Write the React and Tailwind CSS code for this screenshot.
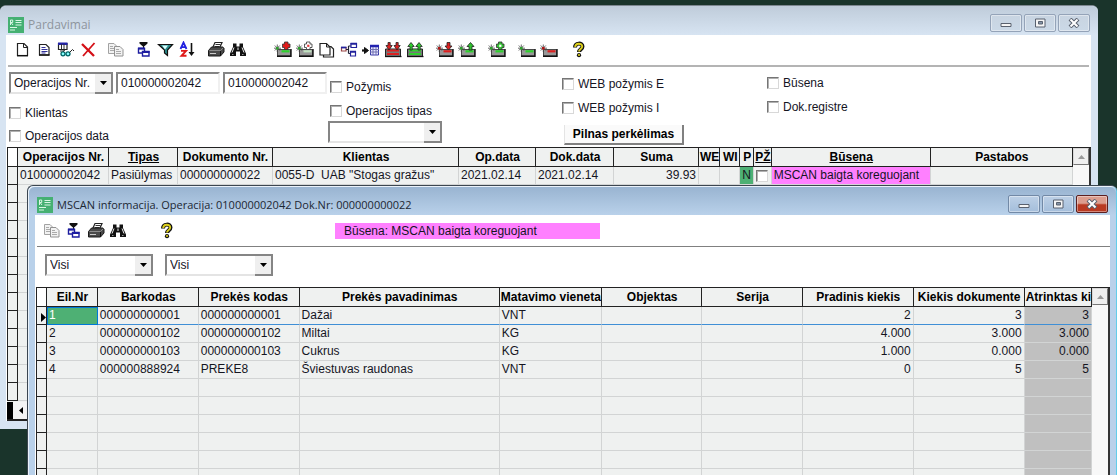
import React from "react";

/* ---------- Toolbar icons ---------- */

const Icon = ({ children, width = 18 }) => (
  <svg width={width} height="18" viewBox={`0 0 ${width} 18`} fill="none" aria-hidden="true">
    {children}
  </svg>
);

const NewIcon = () => (
  <Icon>
    <path d="M4.500 2.500h6.500l3.500 3.500v8.500h-10z" fill="#fff" stroke="#222" strokeWidth="1.200" />
    <path d="M10.500 2.500v4h4" stroke="#222" />
    <path d="M4 14.700h11" stroke="#111" strokeWidth="1.500" />
  </Icon>
);

const DocIcon = () => (
  <Icon>
    <path d="M4.500 3.500h6.500l3 3v7.500h-9.500z" fill="#fff" stroke="#222" strokeWidth="1.200" />
    <path d="M4 14h10.500" stroke="#111" strokeWidth="1.500" />
    <path d="M6.500 6.500h4M6.500 8.500h6M6.500 10.500h6M6.500 12h4" stroke="#33339a" strokeWidth="1.200" />
  </Icon>
);

const PreviewIcon = () => (
  <Icon>
    <path d="M1.500 2.500h8.500v6H1.500z" fill="#fff" stroke="#222" strokeWidth="1.200" />
    <path d="M1 1.500h9.500V4H1z" fill="#2424a8" />
    <path d="M4.500 3v5M7 3v5M3 10h4" stroke="#333" />
    <circle cx="6" cy="12.800" r="2" fill="#8ff" stroke="#066" strokeWidth="1.300" />
    <circle cx="11" cy="12.800" r="2" fill="#8ff" stroke="#066" strokeWidth="1.300" />
    <path d="M12.500 11.500L15.500 8.500l1.500 1.500M6 10.500l2.500-2" stroke="#222" />
  </Icon>
);

const DeleteIcon = () => (
  <Icon>
    <path d="M3 3l12 12" stroke="#d40f16" strokeWidth="2.300" />
    <path d="M15.500 2L4 15" stroke="#d40f16" strokeWidth="1.800" />
  </Icon>
);

const CopyIcon = () => (
  <Icon>
    <path d="M1.500 2.500h5.500l3 3v7H1.500z" fill="#f2f2f2" stroke="#a2a2a2" />
    <path d="M3 5.500h3M3 7.500h4M3 9.500h4" stroke="#aaa" />
    <path d="M7.500 5.500h5.500l3 3v6.500H7.500z" fill="#f2f2f2" stroke="#929292" />
    <path d="M9 8.500h3M9 10.500h5M9 12.500h5" stroke="#aaa" />
  </Icon>
);

const TreeIcon = () => (
  <Icon>
    <path d="M4.500 1h8v1.500L8.500 6l-4-3.500z" fill="#111" />
    <path d="M8.500 5v2" stroke="#111" />
    <path d="M3.500 7.500h6v4.500h-6z" fill="#fff" stroke="#1c1ca0" strokeWidth="1.400" />
    <path d="M7.500 10.500h6.500v4.500H7.500z" fill="#fff" stroke="#1c1ca0" strokeWidth="1.400" />
    <path d="M3 7.500h7M7 11h7.500" stroke="#1c1ca0" strokeWidth="1.800" />
  </Icon>
);

const FilterIcon = () => (
  <Icon>
    <path d="M1.500 3.500h14L10.500 9v5.500l-3-2.500V9z" fill="#2a8d8d" stroke="#111" strokeWidth="1.200" />
    <path d="M5 4.500h6L8 8.500z" fill="#d9ffff" />
  </Icon>
);

const SortIcon = () => (
  <Icon>
    <path d="M1.500 8l3-6.500L7.500 8M3 6.200h3.500" stroke="#2222e0" strokeWidth="1.800" />
    <path d="M2 9.900h5L2.500 14.800H7.500" stroke="#e01a1a" strokeWidth="1.900" />
    <path d="M12.500 2v11" stroke="#111" strokeWidth="1.600" />
    <path d="M9.500 11h6l-3 4z" fill="#111" />
  </Icon>
);

const PrintIcon = () => (
  <Icon>
    <path d="M5.500 7l2.500-5.500h7L12.500 7" fill="#fff" stroke="#222" strokeWidth="1.200" />
    <path d="M8.500 3.500h5M7.500 5.500h5" stroke="#333" />
    <path d="M1.500 9.500l3-3.500h11.500l1 1v4l-3.500 4h-12z" fill="#4a4a4a" stroke="#1a1a1a" />
    <path d="M2.500 9.500h11l3-3" stroke="#8c8c8c" />
    <path d="M3 12.500h6" stroke="#ccc" />
    <path d="M13.500 10v5" stroke="#111" />
  </Icon>
);

const FindIcon = () => (
  <Icon>
    <path d="M4 2.500h3.500v3h3v-3H14v3.500l3 6.500v2.500h-6v-4.500H7v4.500H1v-2.500L4 6z" fill="#111" />
    <path d="M5 6.500L3 11.500M13 6.500l2 5M9 6.500v2.500" stroke="#eee" />
    <path d="M3 13.500h1.500M13 13.500h1.500" stroke="#999" />
  </Icon>
);

const HelpIcon = () => (
  <Icon>
    <path d="M5 6.500c0-5 7.500-5 7.500-1 0 2.800-3.500 3-3.500 5.500" stroke="#111" strokeWidth="4" />
    <circle cx="9" cy="14.200" r="2.100" fill="#111" />
    <path d="M5.200 6c0-4.300 7-4.300 7-.5 0 2.800-3.200 2.800-3.200 5" stroke="#dccf1c" strokeWidth="1.900" />
    <circle cx="9" cy="14" r="1.100" fill="#dccf1c" />
  </Icon>
);

const PagesIcon = () => (
  <Icon>
    <path d="M5.500 5.500h7.500l2.500 2.500v8h-10z" fill="#fff" stroke="#222" strokeWidth="1.200" />
    <path d="M2 2.500h6.500l3.500 3.500v8H2z" fill="#fff" stroke="#222" strokeWidth="1.200" />
    <path d="M8.500 2.500V6H12" stroke="#222" />
  </Icon>
);

const FlowIcon = () => (
  <Icon>
    <path d="M1.500 6.500h4.500v3.500h-4.500z" fill="#fff" stroke="#944" strokeWidth="1.200" />
    <path d="M1 6.500h5.500" stroke="#22229c" strokeWidth="1.800" />
    <path d="M6 8.500h3M8.500 5v7.500M8.500 5H11M8.500 12.500H11" stroke="#223" strokeWidth="1.200" />
    <path d="M11 2.500h5.500v4H11zM10.500 10.500h5v4.500h-5z" fill="#fff" stroke="#22229c" strokeWidth="1.200" />
    <path d="M10.500 2.700h6.500M10 10.700h6" stroke="#22229c" strokeWidth="2" />
  </Icon>
);

const ArrowTableIcon = () => (
  <Icon>
    <path d="M0 9.500h4" stroke="#111" strokeWidth="2.200" />
    <path d="M2.500 6.500l4 3-4 3z" fill="#111" stroke="#111" />
    <path d="M8.500 4.500h8v9.500h-8z" fill="#e8e8ff" stroke="#3a3aa8" />
    <path d="M8 5h9" stroke="#2222b0" strokeWidth="2.500" />
    <path d="M11 6v8M14 6v8M8 8.500h9M8 11h9" stroke="#7070b0" />
  </Icon>
);

const BoxArrowsIcon = ({ color, down }) => (
  <Icon>
    <path d="M1.500 8h15v7.500h-15z" fill="#777" stroke="#222" />
    <path d="M3 9.500h12M3 13h12" stroke={color} strokeWidth="2" />
    <path d="M1 15.500h16.500" stroke="#111" strokeWidth="1.300" />
    {down ? (
      <path d="M4 1.500h2.200v3h2L5 9 2 4.500h2zM12 1.500h2.200v3h2L13 9l-3-4.500h2z" fill={color} stroke="#222" strokeWidth=".8" />
    ) : (
      <path d="M4 9h2.200V5.500h2L5 1.500l-3.200 4H4zM12 9h2.200V5.500h2L13 1.500l-3.200 4H12z" fill={color} stroke="#222" strokeWidth=".8" />
    )}
  </Icon>
);

// Scanner box with a spark on its left, the mark on top says what is sent
const BoxIcon = ({ bar, spark = "#2fa02f", children }) => (
  <Icon>
    <path d="M3.500 8.500h13v6.500h-13z" fill="#989898" stroke="#4a4a4a" />
    <path d="M3 15.300h14V8" stroke="#111" strokeWidth="1.400" />
    <path d="M7.500 10.300h8" stroke={bar} strokeWidth="2.200" />
    <path d="M0 7.200h7M3.300 3.500v7.500M.8 4.500l5 5M5.800 4.500l-5 5" stroke="#444" strokeWidth=".8" />
    <path d="M2 6h2.600v2.600H2z" fill={spark} />
    {children}
  </Icon>
);

const PlusMark = ({ fill, dot }) => (
  <>
    <path d="M10.500 1h3.500v2h2v3.500h-2v2h-3.500v-2h-2V3h2z" fill={fill} stroke="#333" strokeWidth=".8" />
    {dot && <path d="M11.200 3.700h2.200v2.200h-2.200z" fill={dot} />}
  </>
);

const ArrowMark = ({ fill, down }) => (
  <path
    d={down ? "M11 1.500h3v3.500h2L12.500 9 9 5h2z" : "M11 9h3V5.500h2l-3.500-4-3.500 4h2z"}
    fill={fill}
    stroke="#222"
    strokeWidth=".8"
  />
);

const AppLogo = () => (
  <svg width="16" height="16" viewBox="0 0 16 16" fill="none" className="shrink-0" aria-hidden="true">
    <path d="M0 0h16v16H0z" fill="#45b072" />
    <path d="M2.500 8V3h2.200v2.500H3l2 2.500M7.500 3.500h6M7.500 5.500h6M7.500 8h6M2 10.500h7M2 13h5" stroke="#d9f7e4" />
  </svg>
);

const ToolButton = ({ label, children }) => (
  <button type="button" aria-label={label} className="flex h-[22px] w-[22px] items-center justify-center">
    {children}
  </button>
);

/* ---------- Form controls ---------- */

const Arrow = ({ up, color = "#000" }) => (
  <svg width="7" height="4" viewBox="0 0 7 4" aria-hidden="true">
    <path d={up ? "M0 4L3.500 0 7 4z" : "M0 0h7L3.500 4z"} fill={color} />
  </svg>
);

const Select = ({ label, value, className }) => (
  <div className={`relative h-[22px] ${className}`}>
    <select
      aria-label={label}
      defaultValue={value}
      className="h-full w-full appearance-none border-2 border-[#858585] border-b-[#e4e4e4] bg-white pl-[3px] text-xs outline-none"
    >
      <option>{value}</option>
    </select>
    <span className="pointer-events-none absolute inset-y-0 right-0 flex w-[18px] items-center justify-center border-t-2 border-r-2 border-b-2 border-[#858585] bg-[#efefef]">
      <Arrow />
    </span>
  </div>
);

const TextBox = ({ label, value }) => (
  <input
    type="text"
    aria-label={label}
    defaultValue={value}
    className="h-[22px] w-[104px] border-2 border-t-[#858585] border-r-[#f0f0f0] border-b-[#f0f0f0] border-l-[#858585] bg-white pl-[3px] text-xs outline-none"
  />
);

const CheckBox = ({ label, className = "h-5" }) => (
  <label className={`flex items-center gap-1 ${className}`}>
    <input
      type="checkbox"
      className="h-3 w-3 appearance-none border border-t-[#757575] border-r-[#d8d8d8] border-b-[#d8d8d8] border-l-[#757575] bg-white shadow-[inset_1px_1px_0_#b0b0b0]"
    />
    {label}
  </label>
);

/* ---------- Window frame ---------- */

const WindowButtons = ({ active }) => {
  const base = "flex h-[18px] w-8 items-center justify-center rounded-[2px] border shadow-[inset_0_0_0_1px_rgba(255,255,255,0.4)]";
  const plain = active
    ? "border-[#7289a6] bg-linear-to-b from-[#bdd0e6] to-[#a4bedb]"
    : "border-[#94a3b8] bg-linear-to-b from-[#c8d4e1] to-[#cbd9e7]";
  const close = active
    ? "border-[#5c1f1f] bg-linear-to-b from-[#dc9d8e] from-45% to-[#b93a22] to-55%"
    : plain;

  return (
    <div className="flex gap-0.5 self-start">
      <button type="button" aria-label="Minimize" className={`${base} ${plain}`}>
        <svg width="12" height="10" viewBox="0 0 12 10">
          <path d="M1 5.500h10v3H1z" fill="#f5f5f5" stroke="#59616e" />
        </svg>
      </button>
      <button type="button" aria-label="Maximize" className={`${base} ${plain}`}>
        <svg width="12" height="10" viewBox="0 0 12 10">
          <path d="M1.500 1h9.500v8H1.500z" fill="#f5f5f5" stroke="#59616e" />
          <path d="M4.500 3.500h4v2.500h-4z" fill="#8494a8" stroke="#59616e" />
        </svg>
      </button>
      <button type="button" aria-label="Close" className={`${base} ${close}`}>
        <svg width="12" height="10" viewBox="0 0 12 10">
          <path d="M2 1l8 8M10 1L2 9" stroke="#59616e" strokeWidth="4" />
          <path d="M2.500 1.500l7 7M9.500 1.500l-7 7" stroke="#fff" strokeWidth="2" />
        </svg>
      </button>
    </div>
  );
};

/* ---------- Grid ---------- */

const ScrollTrack = () => (
  <div className="w-[18px] shrink-0 border-r-2 border-[#333] bg-[#f8f8f8]">
    <button
      type="button"
      aria-label="Scroll up"
      className="flex h-[17px] w-4 items-center justify-center border border-[#d8d8d8] border-r-[#777] border-b-[#777] bg-[#efefef]"
    >
      <Arrow up color="#999" />
    </button>
  </div>
);

const Grid = ({ columns, rows, emptyRows, current }) => (
  <div className="flex border-t border-l border-[#222]">
    <table className="min-w-0 flex-1 table-fixed border-separate border-spacing-0 bg-[#eff1f0]">
      <colgroup>
        <col className="w-[10px]" />
        {columns.map((col) => (
          <col key={col.title} className={col.width} />
        ))}
      </colgroup>
      <thead>
        <tr className="h-[19px]">
          <th className="border-r border-b border-[#222] bg-white p-0" />
          {columns.map((col) => (
            <th
              key={col.title}
              className={`overflow-hidden border-r border-b border-[#222] p-0 pl-px leading-[18px] font-bold whitespace-nowrap text-black ${
                col.underline ? "underline" : ""
              }`}
            >
              {col.title}
            </th>
          ))}
        </tr>
      </thead>
      <tbody>
        {rows.map((row, i) => (
          <tr key={i} className="h-[18px]">
            <td className="border-r border-b border-[#222] p-0">
              {current === i && (
                <svg width="9" height="9" viewBox="0 0 9 9" className="mt-1" aria-hidden="true">
                  <path d="M4 0l5 4.500L4 9z" fill="#000" />
                </svg>
              )}
            </td>
            {row.map((cell, j) => {
              const col = columns[j];
              const selected = current === i && j === 0;
              return (
                <td
                  key={col.title}
                  className={`overflow-hidden border-r border-b p-0 px-0.5 leading-[17px] whitespace-pre ${
                    col.right ? "text-right" : ""
                  } ${current === i ? "border-b-[#3f8fd6]" : "border-b-[#d2d4d4]"} ${
                    selected
                      ? "border-r-[#0078d7] bg-[#4eb074] text-white outline outline-offset-[-1px] outline-[#0078d7]"
                      : `border-r-[#d2d4d4] ${col.cell || ""}`
                  }`}
                >
                  {cell}
                </td>
              );
            })}
          </tr>
        ))}
        {Array.from({ length: emptyRows }, (_, i) => (
          <tr key={`empty-${i}`} className="h-[18px]">
            <td className="border-r border-b border-[#222] p-0" />
            {columns.map((col) => (
              <td
                key={col.title}
                className={`border-r border-b border-[#d2d4d4] p-0 ${col.emptyCell || ""}`}
              />
            ))}
          </tr>
        ))}
      </tbody>
    </table>
    <ScrollTrack />
  </div>
);

const salesColumns = [
  { title: "Operacijos Nr.", width: "w-[91px]" },
  { title: "Tipas", width: "w-[69px]", underline: true },
  { title: "Dokumento Nr.", width: "w-[95px]" },
  { title: "Klientas", width: "w-[186px]" },
  { title: "Op.data", width: "w-[77px]" },
  { title: "Dok.data", width: "w-[78px]" },
  { title: "Suma", width: "w-[85px]", right: true },
  { title: "WE", width: "w-[21px]" },
  { title: "WI", width: "w-[20px]" },
  { title: "P", width: "w-[14px]", cell: "bg-[#4eb074]" },
  { title: "PŽ", width: "w-[17px]", underline: true },
  { title: "Būsena", width: "w-[159px]", underline: true, cell: "bg-[#ff80ff]" },
  { title: "Pastabos", width: "w-auto" },
];

const salesRows = [
  [
    "010000002042",
    "Pasiūlymas",
    "000000000022",
    '0055-D  UAB "Stogas gražus"',
    "2021.02.14",
    "2021.02.14",
    "39.93",
    "",
    "",
    "N",
    <input
      type="checkbox"
      aria-label="PŽ"
      className="block h-3 w-3 appearance-none border border-t-[#757575] border-r-[#d8d8d8] border-b-[#d8d8d8] border-l-[#757575] bg-white shadow-[inset_1px_1px_0_#b0b0b0]"
    />,
    "MSCAN baigta koreguojant",
    "",
  ],
];

const scanColumns = [
  { title: "Eil.Nr", width: "w-[51px]" },
  { title: "Barkodas", width: "w-[101px]" },
  { title: "Prekės kodas", width: "w-[101px]" },
  { title: "Prekės pavadinimas", width: "w-[201px]" },
  { title: "Matavimo vieneta", width: "w-[101px]" },
  { title: "Objektas", width: "w-[101px]" },
  { title: "Serija", width: "w-[101px]" },
  { title: "Pradinis kiekis", width: "w-[111px]", right: true },
  { title: "Kiekis dokumente", width: "w-[111px]", right: true },
  { title: "Atrinktas ki", width: "w-auto", right: true, cell: "bg-[#c0c0c0]", emptyCell: "bg-[#c0c0c0]" },
];

const scanRows = [
  ["1", "000000000001", "000000000001", "Dažai", "VNT", "", "", "2", "3", "3"],
  ["2", "000000000102", "000000000102", "Miltai", "KG", "", "", "4.000", "3.000", "3.000"],
  ["3", "000000000103", "000000000103", "Cukrus", "KG", "", "", "1.000", "0.000", "0.000"],
  ["4", "000000888924", "PREKE8", "Šviestuvas raudonas", "VNT", "", "", "0", "5", "5"],
];

/* ---------- Windows ---------- */

const SalesToolbar = () => (
  <div className="mx-0.5 flex h-8 items-center border-b-2 border-[#b4b4b4] pl-[3px]">
    <div className="flex gap-1.5">
      <div className="flex">
        <ToolButton label="Naujas"><NewIcon /></ToolButton>
        <ToolButton label="Atidaryti"><DocIcon /></ToolButton>
        <ToolButton label="Peržiūra"><PreviewIcon /></ToolButton>
        <ToolButton label="Trinti"><DeleteIcon /></ToolButton>
      </div>
      <ToolButton label="Kopijuoti"><CopyIcon /></ToolButton>
      <div className="flex">
        <ToolButton label="Struktūra"><TreeIcon /></ToolButton>
        <ToolButton label="Filtras"><FilterIcon /></ToolButton>
        <ToolButton label="Rūšiuoti"><SortIcon /></ToolButton>
      </div>
      <div className="flex">
        <ToolButton label="Spausdinti"><PrintIcon /></ToolButton>
        <ToolButton label="Ieškoti"><FindIcon /></ToolButton>
      </div>
    </div>
    <div className="ml-[23px] flex gap-2">
      <div className="flex">
        <ToolButton label="Pridėti"><BoxIcon bar="#2fd02f"><PlusMark fill="#e01a1a" /></BoxIcon></ToolButton>
        <ToolButton label="Pridėti tuščią"><BoxIcon bar="#bfe0bf"><PlusMark fill="#fff" dot="#e03a3a" /></BoxIcon></ToolButton>
        <ToolButton label="Lapai"><PagesIcon /></ToolButton>
        <ToolButton label="Ryšiai"><FlowIcon /></ToolButton>
        <ToolButton label="Į lentelę"><ArrowTableIcon /></ToolButton>
        <ToolButton label="Įkelti viską"><BoxArrowsIcon color="#dc2020" down /></ToolButton>
        <ToolButton label="Iškelti viską"><BoxArrowsIcon color="#2fd02f" /></ToolButton>
      </div>
      <div className="flex">
        <ToolButton label="Įkelti"><BoxIcon bar="#dc2020" spark="#b01818"><ArrowMark fill="#dc2020" down /></BoxIcon></ToolButton>
        <ToolButton label="Iškelti"><BoxIcon bar="#2fd02f"><ArrowMark fill="#2fc02f" /></BoxIcon></ToolButton>
      </div>
      <ToolButton label="Papildyti"><BoxIcon bar="#2fd02f"><PlusMark fill="#35c435" dot="#fff" /></BoxIcon></ToolButton>
      <div className="flex">
        <ToolButton label="Aktyvuoti"><BoxIcon bar="#2fd02f" /></ToolButton>
        <ToolButton label="Išjungti"><BoxIcon bar="#dc2020" spark="#b01818" /></ToolButton>
      </div>
      <ToolButton label="Pagalba"><HelpIcon /></ToolButton>
    </div>
  </div>
);

const SalesFilters = () => (
  <div className="flex h-20 pl-[3px]">
    <div className="w-[319px] pt-[5px]">
      <div className="flex gap-[3px]">
        <Select label="Paieškos laukas" value="Operacijos Nr." className="w-[104px]" />
        <TextBox label="Nuo" value="010000002042" />
        <TextBox label="Iki" value="010000002042" />
      </div>
      <div className="mt-[7px]">
        <CheckBox label="Klientas" className="h-[23px]" />
        <CheckBox label="Operacijos data" className="h-[23px]" />
      </div>
    </div>
    <div className="flex w-[234px] flex-col pt-2.5">
      <div className="flex flex-col gap-1 pl-0.5">
        <CheckBox label="Požymis" />
        <CheckBox label="Operacijos tipas" />
      </div>
      <Select label="Operacijos tipas" value="" className="w-[114px]" />
    </div>
    <div className="flex w-[205px] flex-col gap-1 pt-[7px]">
      <CheckBox label="WEB požymis E" />
      <CheckBox label="WEB požymis I" />
      <button
        type="button"
        className="mt-[3px] ml-0.5 h-5 w-[120px] border-r-2 border-b-2 border-l border-[#808080] border-l-[#e4e4e4] bg-[#fafafa] font-bold text-black"
      >
        Pilnas perkėlimas
      </button>
    </div>
    <div className="flex flex-col gap-1 pt-1.5">
      <CheckBox label="Būsena" />
      <CheckBox label="Dok.registre" />
    </div>
  </div>
);

const SalesWindow = () => (
  <section className="absolute top-[5px] right-[19px] left-0 rounded-t-md border-t border-[#7d8790] bg-[#d7e4f2] pr-[7px] pb-2 pl-1.5">
    <header className="-mr-[7px] -ml-1.5 flex h-[29px] items-center rounded-t-md bg-linear-to-b from-[#bfccda] to-[#d7e4f2] px-2 pt-2">
      <AppLogo />
      <h1 className="ml-1 flex-1 font-['Open_Sans',sans-serif] text-xs leading-4 text-[#8e959d]">Pardavimai</h1>
      <WindowButtons />
    </header>
    <div className="bg-white">
      <SalesToolbar />
      <SalesFilters />
      <div className="pl-px">
        <Grid columns={salesColumns} rows={salesRows} emptyRows={12} />
        <div className="flex h-5 items-end border-b-2 border-[#222] bg-[#eff1f0]">
          <span className="h-[17px] w-1.5 bg-black" />
          <button
            type="button"
            aria-label="Scroll left"
            className="flex h-[17px] w-4 items-center justify-center bg-[#f4f4f4]"
          >
            <svg width="4" height="7" viewBox="0 0 4 7" aria-hidden="true">
              <path d="M4 0v7L0 3.500z" fill="#000" />
            </svg>
          </button>
        </div>
      </div>
    </div>
  </section>
);

const ScanWindow = () => (
  <section className="absolute top-[185px] right-0 left-[27px] rounded-t-md border-t border-l border-[#3c4650] bg-[#b9d1ea] pr-[7px] pl-[7px] shadow-[inset_1px_1px_0_#eaf2fa,inset_-1px_0_0_#62cdea]">
    <header className="-mx-1.5 mt-px flex h-7 items-center rounded-t-md bg-linear-to-b from-[#99b4d1] to-[#b9d1ea] px-2 pt-2">
      <AppLogo />
      <h2 className="ml-1 flex-1 font-['Open_Sans',sans-serif] text-[11px] leading-4 text-[#1c2733]">
        MSCAN informacija. Operacija: 010000002042 Dok.Nr: 000000000022
      </h2>
      <WindowButtons active />
    </header>
    <div className="bg-white">
      <div className="ml-0.5 flex h-8 items-center border-b border-[#808080] pl-1">
        <ToolButton label="Kopijuoti"><CopyIcon /></ToolButton>
        <ToolButton label="Struktūra"><TreeIcon /></ToolButton>
        <ToolButton label="Spausdinti"><PrintIcon /></ToolButton>
        <ToolButton label="Ieškoti"><FindIcon /></ToolButton>
        <div className="ml-[27px]">
          <ToolButton label="Pagalba"><HelpIcon /></ToolButton>
        </div>
        <p className="ml-[157px] h-4 w-[265px] bg-[#ff80ff] pl-[9px] leading-4">
          Būsena: MSCAN baigta koreguojant
        </p>
      </div>
      <div className="flex gap-3 pt-[7px] pb-[11px] pl-2.5">
        <Select label="Būsena" value="Visi" className="w-[108px]" />
        <Select label="Tipas" value="Visi" className="w-[108px]" />
      </div>
      <div className="pl-px">
        <Grid columns={scanColumns} rows={scanRows} emptyRows={8} current={0} />
      </div>
    </div>
  </section>
);

const App = () => (
  <main className="relative h-screen overflow-hidden bg-[#1a342b] font-['Liberation_Sans',Arial,sans-serif] text-xs text-[#15151f]">
    <SalesWindow />
    <ScanWindow />
  </main>
);

export default App;
